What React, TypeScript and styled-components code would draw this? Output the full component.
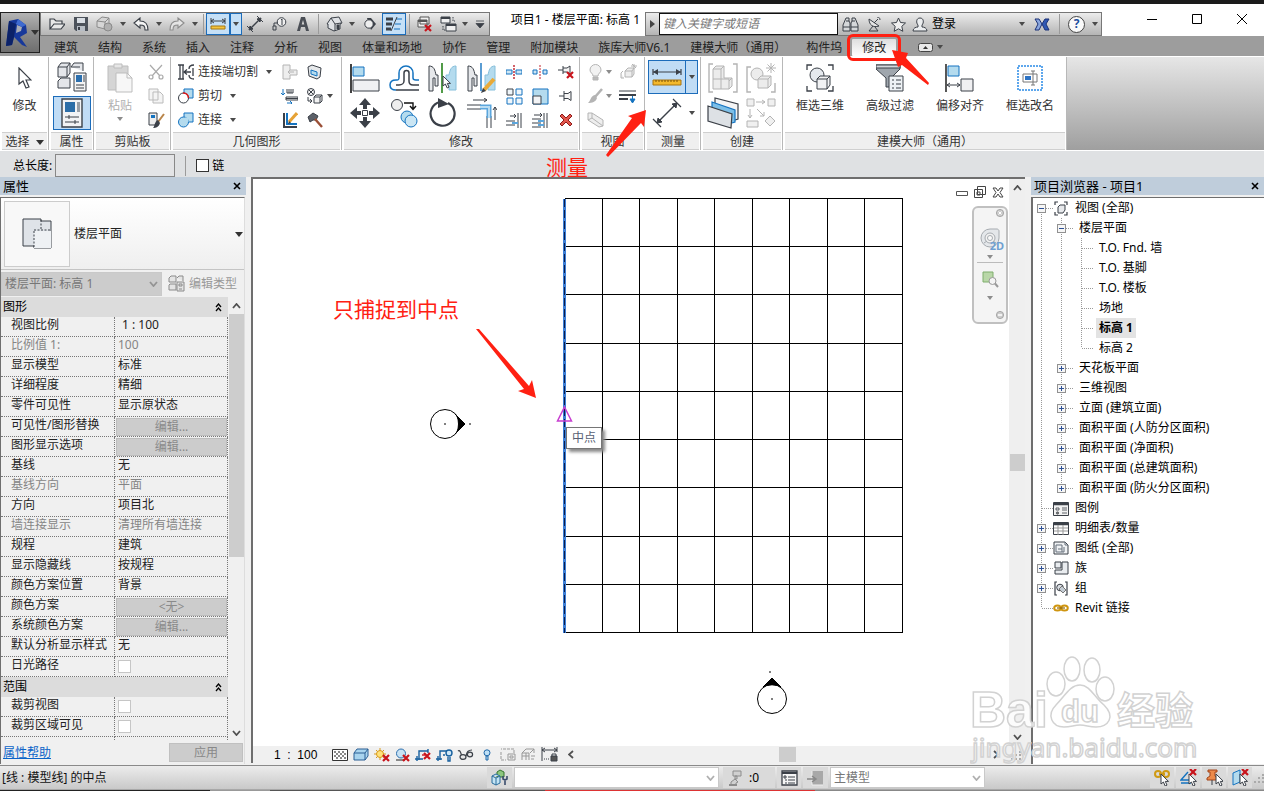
import React from 'react';
import styled, { createGlobalStyle, css } from 'styled-components';

const FONT = `'Noto Sans', 'Noto Sans CJK SC', sans-serif`;
const INK = '#3b4048';
const BLUE = '#1473c0';
const SKY = '#b4dbee';
const DIM = '#b4b4b4';
const RED = '#ff2012';

const GlobalStyle = createGlobalStyle`
  * { box-sizing: border-box; }
  body { margin: 0; background: #f0f0f0; }
  button, input, select { font: inherit; color: inherit; margin: 0; }
  button { padding: 0; border: 0; background: none; }
`;

/* ---------- icons ---------- */

type Art = [number, number, React.ReactNode];

const cross = (x: number, y: number) => (
  <path d={`M${x} ${y}l6 6M${x + 6} ${y}l-6 6`} stroke="#c8141c" strokeWidth="2.2" fill="none" />
);
const cursorAt = (x: number, y: number) => (
  <path d={`M${x} ${y}v10l2.4-2 1.8 4 1.8-.9-1.7-3.7h3.2z`} fill="#fff" stroke={INK} strokeWidth="1" />
);

const art: Record<string, Art> = {
  logo: [22, 28, <g>
    <path d="M3 2l9-2 8 6 1 8-7 4 7 10-5-2-8-8-2 8-6 1z" fill="#17389a" />
    <path d="M3 2l7 3-2 13-2 8-6 1z" fill="#0c2268" />
    <path d="M11 6l5 2-1 4-5 2z" fill="#a9adb6" />
    <path d="M12 0l8 6-4 2-6-3z" fill="#3f6bd0" />
  </g>],
  open: [16, 14, <path d="M1 12V2h4l2 2h6v3M1 12l4-5h11l-4 5z" fill="#e8e8e8" stroke={INK} strokeWidth="1.2" />],
  save: [14, 14, <g><path d="M0 0h14v14H2l-2-2z" fill="#4c525b" /><path d="M3 1h8v5H3z" fill="#d9dee4" /><path d="M3 9h8v5H3z" fill="#b8bec6" /><path d="M4 10h2v3H4z" fill={INK} /></g>],
  sync: [18, 17, <g fill="#d6d6d6" stroke="#8a8a8a" strokeWidth="1"><path d="M1 5l5-4 7 1v7l-4 4-8-2z" /><path d="M1 5l8 1 4-4M9 6v7" fill="none" /><circle cx="12" cy="11" r="4" fill="#b0b0b0" /></g>],
  undo: [16, 14, <path d="M1 6l6-5v3c6 0 8 3 8 9h-3c0-4-1-5-5-5v3z" fill="#f4f4f4" stroke={INK} strokeWidth="1.1" />],
  redo: [16, 14, <path d="M15 6L9 1v3C3 4 1 7 1 13h3c0-4 1-5 5-5v3z" fill="#e4e4e4" stroke="#8d8d8d" strokeWidth="1.1" />],
  measureSmall: [16, 12, <g><path d="M1 0v6M15 0v6M1 3h14M4 1L1 3l3 2M12 1l3 2-3 2" stroke={INK} fill="none" /><path d="M1 8h14v3H1z" fill="#f5c43c" stroke="#a47612" /></g>],
  dimension: [16, 16, <g stroke={INK} fill="none"><path d="M3 13L13 3" strokeWidth="1.3" /><path d="M0 10l6 6M10 0l6 6" /><path d="M2 14l1-4 3 3zM14 2l-1 4-3-3z" fill={INK} /></g>],
  tag: [15, 14, <g fill="#eee" stroke={INK}><circle cx="9.5" cy="5" r="4.3" /><path d="M2 9v-3h4M1 9h3v4H1zM9 3l1-1v6" fill="none" /></g>],
  textA: [12, 14, <path d="M0 14L4 0h4l4 14H9l-1-4H4l-1 4zM4.7 7.500h2.600L6 3z" fill="#4a4e55" fillRule="evenodd" />],
  house: [17, 16, <g stroke={INK}><path d="M1 8l4-6 8-1 3 6-2 1v5l-6 2-6-3V8z" fill="#dfe2e6" /><path d="M5 2l4 6v7M9 8l6-1" fill="none" /><path d="M11 9h2v4h-2z" fill={INK} /></g>],
  section: [14, 12, <g><path d="M4 0l4 0 5 6-5 6z" fill={INK} /><circle cx="6" cy="6" r="4.2" fill="#eee" stroke={INK} /></g>],
  thinLines: [16, 14, <g><path d="M0 2h7M0 7h6M0 12h5" stroke={INK} strokeWidth="3" /><path d="M10 2h6M9 7h6M8 12h6" stroke={BLUE} /><path d="M11 0L5 14" stroke={INK} /></g>],
  closeHidden: [17, 16, <g fill="#f0f0f0" stroke="#555"><path d="M4 1h9v7H4zM2 4h9v7H2z" /><path d="M2 5h9" strokeWidth="2" />{cross(9, 9)}</g>],
  switchWin: [17, 16, <g fill="#f0f0f0" stroke={INK}><path d="M1 1h9v6H1zM6 8h10v7H6z" /><path d="M1 2h9M6 9h10" strokeWidth="2" /><path d="M13 1v4h2M3 10v4h2" fill="none" strokeDasharray="1.500 1" /></g>],
  customize: [10, 8, <path d="M1 1h8M1 3.500h8L5 8z" stroke={INK} fill={INK} strokeWidth=".8" />],
  binoc: [17, 15, <g fill="#d4d7da" stroke={INK}><path d="M4 1h3v3l1 2v8H1V8zM13 1h-3v3L9 6v8h7V8z" /><path d="M1 10h7M9 10h7M4 4h3M10 4h3" /></g>],
  dish: [14, 15, <g fill="#e4e4e4" stroke={INK}><path d="M2 2c0 6 4 9 10 7z" /><path d="M7 6l4-4M6 9l-4 5h9l-3-4M10 0c2 0 3 1 3 3" fill="none" /></g>],
  star: [15, 15, <path d="M7.500 1l2 4.500 5 .5-3.700 3.300 1 5-4.300-2.500-4.300 2.500 1-5L.5 6l5-.5z" fill="#efefef" stroke={INK} />],
  user: [16, 15, <g fill="#eceef0" stroke={INK}><path d="M1 14c0-3 3-4 5-4V8C4 6 4 1 8 1s4 5 2 7v2c2 0 5 1 5 4z" /></g>],
  exchange: [16, 13, <g><path d="M1 1h4l3 5-3 6H1l3-6z" fill="#8ba7de" stroke="#1b3177" /><path d="M15 1h-4L8 6l3 6h4l-3-6z" fill="#3159b4" stroke="#1b3177" /></g>],
  minimize: [10, 10, <path d="M0 5.500h10" stroke="#000" />],
  maximize: [10, 10, <path d="M.5.5h9v9h-9z" stroke="#000" fill="none" />],
  close: [10, 10, <path d="M0 0l10 10M10 0L0 10" stroke="#000" fill="none" />],
  closeBold: [8, 8, <path d="M1 1l6 6M7 1L1 7" stroke="#000" strokeWidth="1.600" fill="none" />],
  ribbonState: [15, 9, <g><rect x=".5" y=".5" width="14" height="8" rx="2" fill="#e8e8e8" stroke="#444" /><path d="M5 6l2.500-3L10 6z" fill="#333" /></g>],
  cursor: [14, 22, <path d="M1 1v16l4-3 3 7 3-1-3-7h5z" fill="#fff" stroke={INK} strokeWidth="1.200" />],
  typeProps: [30, 30, <g stroke={INK}><path d="M1 5l3-4h9v10l-3 4H1zM14 5l3-4h9v8M1 19l3-3h9v10H1z" fill="#e4e6ea" /><path d="M1 5h9v10M10 5l3-4M14 5h9" fill="none" /><path d="M17 11h12v18H17z" fill="#f4f4f4" /><path d="M19 13h6v7h-6z" fill="#2b6fae" stroke="none" /><path d="M27 13v7M19 23h8M19 26h8" /></g>],
  props: [22, 30, <g><path d="M1 1h20v28H1z" fill="#f2f3f5" stroke={INK} strokeWidth="1.400" /><path d="M4 4h10v10H4z" fill="#2c6ea8" /><path d="M16 4h3v10h-3z" fill="#999fa6" /><path d="M4 19h14M4 24h14M8 17v4M14 22v4" stroke={INK} /></g>],
  paste: [26, 30, <g fill="#e6e6e6" stroke="#bdbdbd"><path d="M1 3h20v24H1z" fill="#d5d5d5" /><path d="M7 1h8v4H7z" /><path d="M9 10h11l5 5v14H9z" fill="#f7f7f7" /><path d="M20 10v5h5" fill="none" /></g>],
  cut: [16, 16, <g stroke="#aaa" fill="none" strokeWidth="1.200"><path d="M2 1l10 11M14 1L4 12" /><circle cx="3" cy="13" r="2" /><circle cx="13" cy="13" r="2" /></g>],
  copy: [16, 16, <g stroke="#bbb" fill="#f4f4f4"><path d="M1 1h9v11H1zM5 4h7l3 3v8H5z" /></g>],
  matchType: [17, 17, <g><path d="M1 1h8v12H1z" fill="#eee" stroke={INK} /><path d="M3 3h4v3H3z" fill={BLUE} /><path d="M16 2l-6 8" stroke="#b9854a" strokeWidth="2" /><path d="M10 8l2 3c-1 4-4 5-7 5 2-2 1-6 5-8z" fill={INK} /></g>],
  cope: [16, 16, <g fill="none" stroke={INK} strokeWidth="1.300"><path d="M0 1h6M0 15h6M2 1v14M5 1v14M16 1c-4 0-5 2-5 4M16 15c-4 0-5-2-5-4M15 4v8" /><path d="M6 8h7M9 5.500L6 8l3 2.500" /></g>],
  cutGeo: [16, 16, <g><path d="M6 1h9v9H6z" fill={SKY} stroke={BLUE} /><circle cx="5.500" cy="10" r="5" fill="#fff" stroke={INK} /><path d="M5 5a5 5 0 0 1 5.500 5" stroke="#e01818" strokeWidth="1.500" fill="none" /></g>],
  joinGeo: [16, 16, <g fill={SKY} stroke={BLUE}><path d="M6 1h9v9H6z" /><circle cx="5.500" cy="10" r="5" /><path d="M6.500 5.500h4v4.500h-4z" stroke="none" /></g>],
  wallJoin: [16, 16, <g fill="#eee" stroke={DIM}><path d="M1 1h7v5h7v5H8v4H1z" /><path d="M6 8h6M8 6L6 8l2 2" /></g>],
  splitFace: [15, 16, <g><path d="M1 3l4-2 9 3-1 9-3 2-8-3z" fill="#e6e8ea" stroke={INK} /><path d="M4 6l6 2v4l-6-2z" fill={SKY} stroke={BLUE} /></g>],
  beamJoin: [17, 16, <g fill="none" stroke={INK}><path d="M6 1v4h6V1M8 1v4M10 1v4M5 9h12v3H5zM5 10.500h12" /><path d="M2 1v6M0 5l2 2 2-2M6 15h5M9 13l2 2-2 2" stroke={BLUE} /></g>],
  unjoin: [17, 16, <g fill="#f2f2f2" stroke={INK}><circle cx="5" cy="4" r="3.500" /><path d="M2.500 1.500l5 5M7.500 1.500l-5 5M8 9l2-2h6v6l-2 2H8zM8 9h6v6M14 9l2-2M2 9v4h4M4 11l2 2-2 2" /></g>],
  corner: [16, 17, <g fill="none"><path d="M2 1v14h13" stroke={INK} strokeWidth="2" /><path d="M5 1v11h10" stroke={BLUE} strokeWidth="2" /><path d="M7 10l8-9" stroke="#e6a236" strokeWidth="3" /><path d="M6 12l1-3 2 2z" fill={INK} /></g>],
  hammer: [16, 16, <g><path d="M1 5l5-4 5 3-2 4-3 0-3 2z" fill="#5b6068" stroke={INK} /><path d="M8 7l7 8" stroke="#9a4f36" strokeWidth="2.400" /></g>],
  align: [30, 30, <g><path d="M1 1v29" stroke="#111" strokeWidth="1.600" /><path d="M3 4h11v9H3z" fill={SKY} stroke={BLUE} /><path d="M3 17h26v11H3z" fill="#f0f1f3" stroke={INK} /></g>],
  offset: [30, 26, <g fill="none" strokeWidth="1.500"><path d="M7 25c-4 0-6-2-6-5s2-5 6-5h1c2 0 2-1 2-3V8a7 7 0 0 1 14 0v5c0 1 1 2 3 2h3" stroke={BLUE} /><path d="M7 20h3c3 0 5-2 5-4V8a2 2 0 0 1 5 0v8c0 3 2 4 4 4h6M7 25h23" stroke={INK} /></g>],
  mirrorPick: [30, 30, <g><path d="M1 3c5 0 6 4 7 9h2v11H7V15H5v13H1z" fill="#e6e8eb" stroke={INK} /><path d="M28 3c-5 0-6 4-7 9h-3v11h3v4h7z" fill={SKY} stroke="#86bfdb" /><path d="M14 0v30" stroke="#3f9135" strokeWidth="1.800" />{cursorAt(15, 13)}</g>],
  mirrorDraw: [30, 30, <g><path d="M1 3c5 0 6 4 7 9h2v11H7V15H5v13H1z" fill="#e6e8eb" stroke={INK} /><path d="M28 3c-5 0-6 4-7 9h-3v11h3v4h7z" fill={SKY} stroke="#86bfdb" /><path d="M14 0v28" stroke={BLUE} strokeWidth="1.400" /><path d="M27 16L17 27" stroke="#e9aa38" strokeWidth="4" /><path d="M14 30l2-5 3 3z" fill={INK} /></g>],
  move: [30, 30, <g fill={INK}><path d="M15 0l6 7h-4v4h-4V7H9zM15 30l6-7h-4v-4h-4v4H9zM0 15l7-6v4h4v4H7v4zM30 15l-7-6v4h-4v4h4v4z" /><path d="M12.500 12.500h5v5h-5z" fill="#fff" stroke={INK} /></g>],
  copyObj: [28, 30, <g><circle cx="7" cy="7" r="5.500" fill="#eee" stroke={INK} /><path d="M14 5h9v6M20 8l3 3.500L26 8" fill="none" stroke="#111" strokeWidth="1.400" /><circle cx="17" cy="19" r="6" fill={SKY} stroke={BLUE} /><circle cx="21" cy="23" r="6" fill="#cbe6f4" stroke={BLUE} /></g>],
  rotate: [30, 30, <g><path d="M20 5a12 12 0 1 1-8-1" fill="none" stroke={INK} strokeWidth="2.200" /><path d="M10 0l11 6-11 4z" fill={INK} /></g>],
  trim: [30, 30, <g fill="none"><path d="M0 7h14M0 11h14M20 18v12M24 18v12" stroke={INK} /><path d="M13 9h9v11" stroke="#5ba6dd" strokeWidth="5" /><path d="M13 9h9v11" stroke="#b9dcf2" strokeWidth="2" /><path d="M6 2h14M17 0l3 2-3 2M28 22V9M26 12l2-3 2 3" stroke={INK} /></g>],
  split: [16, 14, <g><path d="M0 5h6v4H0zM10 5h6v4h-6z" fill="#cde6f4" stroke={BLUE} /><path d="M8 0v14" stroke="#c0202a" strokeDasharray="2 1" strokeWidth="1.400" /></g>],
  splitGap: [16, 14, <g><path d="M1 5h4v4H1zM11 5h4v4h-4z" fill="#cde6f4" stroke={BLUE} /><path d="M8 0v14" stroke="#c0202a" strokeDasharray="2 1" /></g>],
  unpin: [17, 16, <g><path d="M0 6h5M5 2v8M5 4h4l3-2v8L9 8H5" fill="#f4f4f4" stroke={INK} />{cross(9, 8)}</g>],
  array: [17, 17, <g fill="#f0f6fa"><path d="M1 1h6v6H1z" stroke={INK} /><path d="M10 1h6v6h-6zM1 10h6v6H1zM10 10h6v6h-6z" stroke={BLUE} /></g>],
  scale: [17, 17, <g><path d="M1 1h15v15H1z" fill={SKY} stroke={BLUE} /><path d="M1 8h8v8H1z" fill="#f2f3f5" stroke={INK} /></g>],
  pin: [15, 12, <path d="M0 6h5M5 1v10M5 3.500h4l3-2v9l-3-2H5" fill="#f4f4f4" stroke={INK} />],
  trimOne: [16, 16, <g fill="none" stroke={INK}><path d="M0 9h9M0 13h9M12 1v15M15 1v15M4 4h6M8 2l2 2-2 2" /><path d="M6 11h6" stroke="#5ba6dd" strokeWidth="2" /></g>],
  trimMany: [16, 16, <g fill="none" stroke={INK}><path d="M0 7h9M0 11h9M0 15h9M12 1v15M15 1v15M2 3h8M8 1l2 2-2 2" /><path d="M6 9h6M6 13h6" stroke="#5ba6dd" strokeWidth="2" /></g>],
  del: [14, 14, <path d="M1 3l2-2 4 4 4-4 2 2-4 4 4 4-2 2-4-4-4 4-2-2 4-4z" fill="#e2574c" stroke="#8f1a1a" />],
  bulb: [13, 17, <g fill="#f2f2f2" stroke={DIM}><path d="M4 12c0-3-3-3-3-6a5 5 0 0 1 11 0c0 3-3 3-3 6z" /><path d="M4 13h5v3H4z" fill="#bbb" /></g>],
  displace: [17, 16, <g fill="#eee" stroke={DIM}><path d="M5 7l3-3h6v6l-2 3H5zM5 7h7v6M12 7l2-3" /><path d="M1 9l2-2M1 9v5h3M14 0v5M11 2h6M12 0l4 4" /></g>],
  brush: [16, 16, <g><path d="M15 1L8 9" stroke={DIM} strokeWidth="2.500" /><path d="M8 7l2 3c-1 4-5 5-9 5 3-2 2-7 7-8z" fill={DIM} /></g>],
  lineweight: [18, 15, <g><path d="M0 2h17" stroke={INK} /><path d="M0 6h17" stroke={INK} strokeWidth="2" /><path d="M0 10h9" stroke={INK} strokeWidth="2" /><path d="M13.500 7v5M11 10l2.500 4 2.500-4z" stroke={BLUE} fill={BLUE} /></g>],
  hideBox: [17, 16, <path d="M1 1l4 0 11 7v6l-4 1L1 8zM5 6V1M5 6l11 8M1 8l4-2" fill="#eee" stroke={DIM} />],
  measure: [30, 18, <g><path d="M1 1v6M29 1v6M1 4h28" stroke={INK} strokeWidth="1.200" /><path d="M1 4l5-3v6zM29 4l-5-3v6z" fill={INK} /><path d="M1 12h28v5H1z" fill="#f4b92d" stroke="#a87410" /><path d="M4 12v2M7 12v2M10 12v2M13 12v2M16 12v2M19 12v2M22 12v2M25 12v2" stroke="#7a5206" /></g>],
  dimensionBig: [30, 30, <g stroke={INK} fill="none"><path d="M5 25L25 5" strokeWidth="1.400" /><path d="M1 21l8 8M21 1l8 8" strokeWidth="1.200" /><path d="M5 25l1-5 4 4zM25 5l-1 5-4-4z" fill={INK} /></g>],
  assembly: [30, 30, <g fill="#ececec" stroke={DIM}><path d="M5 1H1v28h4M25 1h4v28h-4" fill="none" strokeWidth="1.400" /><path d="M5 6l3-3h8v12h8v8l-3 3H5z" /><path d="M5 6h8v10h8v10M13 6l3-3M5 16h8v10M21 18l3-3" fill="none" /></g>],
  groupNew: [30, 30, <g fill="#ececec" stroke={DIM}><path d="M5 4H1v25h4M25 29h4v-9" fill="none" strokeWidth="1.400" /><circle cx="11" cy="11" r="6" /><path d="M12 16l3-3h10v9l-3 3H12zM12 16h10v9M22 16l3-3" /><path d="M25 0v10M20 5h10M21.500 1.500l7 7M28.500 1.500l-7 7" /></g>],
  similar: [32, 32, <g stroke={INK} strokeWidth="1.200"><path d="M8 9V1l23 6v15l-3 1" fill="#f4f4f4" /><path d="M5 11V5l23 8v12l-3 1" fill="#7cbfe8" stroke={BLUE} /><path d="M1 9l24 8-1 14-23-7z" fill="#dde1e5" /></g>],
  parts: [30, 30, <g fill="#f0f0f0" stroke={DIM}><path d="M1 1h7v7H1zM22 1h7v7h-7zM1 23h11v6H1zM24 18l5 5-5 5-5-5z" /><path d="M10 4h9M16 2l3 2-3 2M4 11v9M2 17l2 3 2-3M11 11l7 7M14 18h4v-4" fill="none" /></g>],
  box3d: [28, 28, <g stroke={INK}><path d="M6 1H1v5M22 1h5v5M1 22v5h5M27 22v5h-5" fill="none" strokeWidth="1.300" /><circle cx="11" cy="11" r="7" fill="#e5e9ee" /><path d="M11 15l3-3h10v9l-3 4H11zM11 15h10v10M21 15l3-3" fill="#f1f2f4" /></g>],
  filter: [28, 28, <g stroke={INK}><path d="M0 1h24v4l-9 9v9h-5v-9L0 5z" fill="#9fa6ad" /><path d="M0 1h24v3H0z" fill="#d4d8dc" /><path d="M13 12h14v15H13z" fill="#eef2f5" /><path d="M16 16h2M16 20h2M16 24h2M20 16h5M20 20h5M20 24h5" /></g>],
  offsetAlign: [30, 28, <g><path d="M1 0v28" stroke="#111" strokeWidth="1.400" /><path d="M3 2h11v10H3z" fill={SKY} stroke={BLUE} /><path d="M16 15h12v12H16z" fill="#f0f0f2" stroke={INK} /><path d="M2 21h13M5 19l-3 2 3 2M12 19l3 2-3 2" stroke={INK} fill="none" /></g>],
  rename: [26, 26, <g fill="none"><path d="M1 1h24v24H1z" stroke="#2a8ae6" strokeWidth="1.500" strokeDasharray="2 1" /><path d="M6 9h14v8H6z" stroke="#777" fill="#fff" /><path d="M8 11h6v4H8z" fill="#2d73c4" /><path d="M16 6v14M14 6h4M14 20h4" stroke="#777" /></g>],
  floorPlan: [34, 34, <g stroke={INK}><path d="M3 2h18v2h10v27H14v-2H3z" fill="#dfe3e8" /><path d="M14 14h17v17H14z" fill="#eef1f4" stroke="none" /><path d="M21 3v10M14 13h17M14 14v16" strokeDasharray="2 1.500" fill="none" /></g>],
  editType: [17, 17, <g fill="#e4e4e4" stroke="#8a8a8a"><path d="M1 3l2-2h5v6H1zM9 3l2-2h4v5M1 10l1-1h6v6H1z" /><path d="M9 7h7v9H9z" /><path d="M11 9h3v2h-3zM11 14h3" /></g>],
  collapse: [7, 9, <path d="M1 4l2.500-3L6 4M1 8l2.500-3L6 8" fill="none" stroke="#000" strokeWidth="1.300" />],
  winMin: [12, 5, <path d="M.5.5h11v4H.5z" fill="#fff" stroke="#555" />],
  winRestore: [12, 12, <path d="M3.500.5h8v8h-8zM.5 3.500h8v8h-8zM3 6h3v3H3z" fill="#fff" stroke="#444" />],
  winClose: [12, 11, <path d="M1 1h3l2 3 2-3h3L8 5.500 11 10H8L6 7l-2 3H1l3-4.500z" fill="#fff" stroke="#444" />],
  navClose: [8, 8, <g><circle cx="4" cy="4" r="3.600" fill="#ccc" stroke="#999" strokeWidth=".8" /><path d="M2.500 2.500l3 3M5.500 2.500l-3 3" stroke="#fff" /></g>],
  navMenu: [8, 8, <g><circle cx="4" cy="4" r="3.600" fill="#ccc" stroke="#999" strokeWidth=".8" /><path d="M2 4h4" stroke="#fff" strokeWidth="1.500" /></g>],
  wheel: [20, 20, <g fill="#e4e7ea" stroke="#a6abb0"><path d="M10 1h7c1 0 2 1 2 2v7a9 9 0 1 1-9-9z" /><circle cx="10" cy="10" r="5" fill="#f2f2f2" /><circle cx="10" cy="10" r="2.500" fill="#fafafa" /><path d="M4 15l3-2M13 13l3 2" /></g>],
  zoomRegion: [17, 17, <g><path d="M1 1h10v10H1z" fill="#b9d7a8" stroke="#7fae6c" /><circle cx="10.500" cy="10" r="3.500" fill="#f4f4f4" stroke="#999" /><path d="M13 12.500l3 3.500" stroke="#999" strokeWidth="2" /></g>],
  detail: [16, 12, <g><path d="M.5.5h15v11H.5z" fill="#fff" stroke="#333" /><path d="M2 2h2v2H2zM6 2h2v2H6zM10 2h2v2h-2zM4 4h2v2H4zM8 4h2v2H8zM12 4h2v2h-2zM2 6h2v2H2zM6 6h2v2H6zM10 6h2v2h-2zM4 8h2v2H4zM8 8h2v2H8zM12 8h2v2h-2z" fill="#888" /></g>],
  visual: [16, 13, <path d="M1 5l3-4h11v7l-3 4H1zM1 5h11v7M12 5l3-4" fill="#a9d4ee" stroke="#2b5f94" />],
  sun: [16, 14, <g><path d="M6 0v12M0 6h12M2 2l8 8M10 2l-8 8" stroke="#d99a1c" /><circle cx="6" cy="6" r="3.500" fill="#ffe27a" stroke="#d99a1c" />{cross(9, 7)}</g>],
  shadow: [16, 14, <g><circle cx="6" cy="5.500" r="4.500" fill="#c7e2f5" stroke="#2d6fae" /><path d="M1 12h9" stroke="#888" strokeWidth="2" />{cross(8, 7)}</g>],
  crop: [17, 14, <g fill="none" stroke="#17609f" strokeWidth="1.400"><path d="M4 12V3h9v2M0 11h8M2 8v5M13 1v3" /><path d="M7 7h3" stroke="#c8141c" />{cross(9, 5)}</g>],
  cropShow: [17, 14, <g fill="none" stroke="#17609f" strokeWidth="1.400"><path d="M4 12V3h8M0 11h6M2 8v5" /><circle cx="13" cy="5" r="3" fill="#cfe7f7" /><path d="M12 9v4h2V9M7 7h2" /></g>],
  glasses: [17, 12, <g fill="#e6e6e6" stroke={INK} strokeWidth="1.200"><path d="M1 2c2-2 3 3 4 5M9 7c1-4 2-6 6-6" fill="none" /><ellipse cx="6" cy="8" rx="3" ry="2.400" /><ellipse cx="13" cy="5.500" rx="2.600" ry="2.300" /></g>],
  reveal: [8, 12, <g fill="#bfe0f6" stroke="#2168a8"><circle cx="4" cy="3.800" r="3" /><path d="M3 7h2v4H3z" /></g>],
  tempView: [16, 13, <g fill="none" stroke="#999"><path d="M3 1h11v4M1 4v8h5M1 1h1" strokeDasharray="3 1" /><path d="M8 6h7v6H8zM10 8h3v2h-3z" /></g>],
  analysis: [16, 13, <g fill="none" stroke="#999"><path d="M1 5l4-4h8M1 5h7v7M1 5v7M5 5v7M1 8h7M9 5l4-4v4M10 8h4M10 11h3" /></g>],
  constraint: [17, 15, <g stroke={INK} fill="none"><path d="M1 0v14M16 0v5M1 3h15M4 1L1 3l3 2M13 1l3 2-3 2" /><path d="M3 12h6" strokeDasharray="1 1" /><path d="M10 9h6v5h-6z" fill="#555" /><path d="M11 9V7h4v2" /></g>],
  workset: [17, 17, <g stroke="#2a6c9c"><path d="M6 3l3-2 4 2v5H6z" fill="#8cc57e" stroke="#35742d" /><path d="M1 7l4-2 4 2v7l-4 2-4-2zM1 7l4 2 4-2M5 9v7" fill="#c4e4f4" /><path d="M12 7v3l2 1 2-1V7M14 11v5" fill="none" stroke="#3a4b6c" strokeWidth="1.600" /></g>],
  editable: [15, 16, <g fill="#d0d0d0" stroke="#8c8c8c"><path d="M5 1h8v5H5zM7 6h2v3H7zM3 15V12l4-3 3 3-2 1v2z" /><path d="M1 15h8" strokeWidth="2" /></g>],
  designOpt: [17, 16, <g stroke={INK} fill="#f5f5f5"><path d="M1 1h15v14H1z" strokeWidth="1.300" /><path d="M1 3h15" strokeWidth="2" /><path d="M3 6h2v2H3zM7 7h7M7 10h7M7 13h7M4 10h2M4 13h2" /></g>],
  pickAdd: [17, 16, <g><path d="M5 1h11v14H5z" fill="#a8a8a8" /><path d="M5 1v14h11" fill="none" stroke="#eee" /><path d="M0 9h8M5 6l4 3-4 3" fill="none" stroke="#888" strokeWidth="1.500" /></g>],
  selLinks: [17, 17, <g><circle cx="4" cy="5" r="3" fill="none" stroke="#cf9a14" strokeWidth="2" /><circle cx="12" cy="5" r="3" fill="none" stroke="#cf9a14" strokeWidth="2" /><path d="M5 5h6" stroke="#cf9a14" strokeWidth="2" />{cursorAt(7, 5)}</g>],
  selUnder: [17, 17, <g><path d="M8 3L1 11h9M1 14h10" fill="none" stroke={BLUE} strokeWidth="1.400" />{cursorAt(9, 5)}{cross(10, 0)}</g>],
  selPinned: [17, 17, <g><path d="M2 1h9v2H9v4l3 2v2H1V9l3-2V3H2z" fill="#ec8a4a" stroke="#a2451a" /><path d="M6 11v5" stroke={INK} />{cursorAt(10, 5)}</g>],
  selFace: [17, 17, <g><path d="M1 4l7-3v12l-7 3z" fill={SKY} stroke={BLUE} />{cursorAt(8, 5)}{cross(10, 0)}</g>],
  views: [14, 15, <g fill="none" stroke={INK}><path d="M4 1H1v3M10 1h3v3M1 11v3h3M13 11v3h-3" strokeWidth="1.200" /><path d="M4 6l2-2h5v5l-2 3H4z" fill="#e7e9ec" /></g>],
  legend: [16, 15, <g stroke={INK} fill="#f2f2f2"><path d="M.5 1.500h15v13H.5z" /><path d="M1 3h14" strokeWidth="2.500" /><path d="M3 7h3v2H3zM9 7h5M9 9h5M9 12h5" strokeWidth=".8" /><circle cx="4.500" cy="12" r="1.200" fill="#777" strokeWidth=".6" /></g>],
  schedule: [16, 13, <g stroke={INK} fill="#fff"><path d="M.5.5h15v12H.5z" /><path d="M1 2h14" strokeWidth="2.500" /><path d="M5 3v10M1 6h14M1 9h14M10 3v10" stroke="#999" /></g>],
  sheet: [16, 14, <g stroke={INK} fill="#f0f2f4"><path d="M1 1h11l3 3v9H1z" /><path d="M3 4h6v7H3zM5 8h4M12 1v3h3M11 6v5H9" fill="none" stroke="#66707c" /></g>],
  family: [15, 14, <g stroke={INK} fill="#e9ecef"><path d="M1 1h6v6H1zM8 1h6v12H1V9h7z" /></g>],
  group: [14, 15, <g stroke={INK} fill="none"><path d="M3 1H1v13h2M11 1h2v13h-2" strokeWidth="1.200" /><circle cx="6" cy="6.500" r="3.300" fill="#d9dde2" /><path d="M8 5l4 4-3 3-4-4z" fill="#c4ccd4" stroke="#777" /></g>],
  link: [16, 8, <g fill="none" stroke="#cf9510" strokeWidth="2"><ellipse cx="4.500" cy="4" rx="3.300" ry="2.600" /><ellipse cx="11.500" cy="4" rx="3.300" ry="2.600" /><path d="M4 4h8" stroke="#8f6405" strokeWidth="1.200" /></g>],
  down: [6, 4, <path d="M0 0h6L3 4z" fill="#4a4a4a" />],
  downDim: [6, 4, <path d="M0 0h6L3 4z" fill="#8c8c8c" />],
  downLarge: [8, 5, <path d="M0 0h8L4 5z" fill="#333" />],
  right: [5, 8, <path d="M0 0v8l5-4z" fill="#444" />],
  chevUp: [9, 6, <path d="M1 5l3.500-4L8 5" fill="none" stroke="#505050" strokeWidth="1.800" />],
  chevDown: [9, 6, <path d="M1 1l3.500 4L8 1" fill="none" stroke="#505050" strokeWidth="1.800" />],
  chevLeft: [6, 9, <path d="M5 1L1 4.500 5 8" fill="none" stroke="#505050" strokeWidth="1.800" />],
  chevRight: [6, 9, <path d="M1 1l4 3.500L1 8" fill="none" stroke="#505050" strokeWidth="1.800" />],
  grip: [10, 10, <path d="M8 1h2v2H8zM8 4h2v2H8zM8 8h2v2H8zM4 4h2v2H4zM4 8h2v2H4zM0 8h2v2H0z" fill="#aaa" />],
};

const Svg = styled.svg`
  display: block;
  flex: none;
`;

function Icon({ name }: { name: string }) {
  const [w, h, body] = art[name];
  return <Svg width={w} height={h} viewBox={`0 0 ${w} ${h}`} aria-hidden="true">{body}</Svg>;
}

/* ---------- shell ---------- */

const Page = styled.div`
  position: relative;
  display: flex;
  flex-direction: column;
  min-height: 100vh;
  overflow: hidden;
  font: 12px/16px ${FONT};
  color: #1c1c1c;
  background: #f0f0f0;
`;

const Header = styled.header`
  position: relative;
  border-top: 4px solid #1b1b1b;
  background: #fff;
`;

const AppMenu = styled.button`
  position: absolute;
  left: 0;
  top: 8px;
  width: 40px;
  height: 41px;
  display: flex;
  align-items: center;
  gap: 3px;
  padding: 0 3px 0 5px;
  border: 1px solid #222;
  background: linear-gradient(#b4b4b4, #8a8a8a 50%, #6f6f6f);
`;

const TitleRow = styled.div`
  display: flex;
  height: 32px;
  padding-top: 8px;
`;

const barSkin = css`
  display: flex;
  align-items: center;
  height: 24px;
  border: 1px solid #777;
  background: linear-gradient(#ececec, #b4b4b4);
`;

const QuickBar = styled.div`
  ${barSkin}
  margin-left: 40px;
  width: 450px;
  flex: none;
  padding-left: 4px;
`;

const Tool = styled.button<{ $w?: number; $active?: boolean }>`
  display: flex;
  flex: none;
  align-items: center;
  justify-content: center;
  width: ${p => p.$w ?? 24}px;
  height: 22px;
  ${p => p.$active && 'background: #c5e0f7; border: 1px solid #1c6cba;'}
`;

const Divider = styled.i<{ $m?: number }>`
  flex: none;
  width: 1px;
  height: 20px;
  margin: 0 ${p => p.$m ?? 3}px;
  background: #9b9b9b;
`;

const DocTitle = styled.h1`
  flex: 1;
  margin: 0;
  padding-right: 5px;
  text-align: right;
  white-space: nowrap;
  font-size: 12px;
  line-height: 16px;
  font-weight: 400;
  color: #000;
`;

const InfoCenter = styled.div`
  ${barSkin}
  flex: none;
  width: 457px;
  color: #000;
`;

const Search = styled.input`
  width: 179px;
  height: 22px;
  padding: 0 3px 2px;
  border: 1px solid #111;
  background: #fff;
  font-style: italic;
  &::placeholder { color: #777; opacity: 1; }
`;

const SignIn = styled.button`
  display: flex;
  align-items: center;
  flex: none;
  gap: 4px;
  width: 115px;
  padding-left: 2px;
  & > :last-child { margin-left: auto; }
`;

const HelpMark = styled.button`
  flex: none;
  width: 17px;
  height: 17px;
  margin: 0 4px 0 8px;
  border: 1px solid #444;
  border-radius: 50%;
  background: #fafafa;
  color: #1c4f9f;
  font-weight: 700;
  font-size: 12px;
  line-height: 14px;
`;

const WindowButtons = styled.div`
  display: flex;
  flex: none;
  margin: -4px 0 0 27px;
`;

const WinButton = styled.button`
  display: flex;
  width: 45px;
  height: 22px;
  align-items: center;
  justify-content: center;
`;

const Tabs = styled.nav`
  display: flex;
  align-items: flex-end;
  gap: 20px;
  height: 20px;
  padding-left: 54px;
  background: #9d9d9d;
`;

const Tab = styled.button<{ $active?: boolean }>`
  flex: none;
  height: 17px;
  line-height: 17px;
  color: #222;
  ${p => p.$active && css`
    margin: 0 -10px;
    padding: 0 10px;
    background: linear-gradient(#dedede, #fff);
    outline: 3px solid ${RED};
    outline-offset: 2px;
    border-radius: 1px;
    z-index: 1;
  `}
`;

const StateTool = styled.button`
  display: flex;
  align-items: center;
  gap: 4px;
  height: 18px;
  margin-left: 12px;
`;

/* ---------- ribbon ---------- */

const Ribbon = styled.div`
  display: flex;
  height: 95px;
  border-top: 1px solid #fff;
  border-bottom: 1px solid #fff;
  background: linear-gradient(#e6e6e6, #9f9f9f);
`;

const PanelBox = styled.section<{ $w: number }>`
  display: flex;
  flex: none;
  flex-direction: column;
  width: ${p => p.$w}px;
  background: #fff;
  border-right: 1px solid #b8b8b8;
`;

const PanelBody = styled.div<{ $pad?: number }>`
  display: flex;
  flex: 1;
  padding: 3px 0 0 ${p => p.$pad ?? 0}px;
`;

const PanelName = styled.h2`
  display: flex;
  align-items: center;
  justify-content: center;
  gap: 6px;
  height: 18px;
  margin: 0 1px 0 2px;
  padding-top: 2px;
  border-top: 1px solid #cfcfcf;
  border-bottom: 1px solid #cfcfcf;
  background: #efefef;
  font-size: 12px;
  line-height: 16px;
  font-weight: 400;
  color: #333;
`;

function Panel({ name, w, pad, arrow, children }: { name: string; w: number; pad?: number; arrow?: boolean; children: React.ReactNode }) {
  return (
    <PanelBox $w={w}>
      <PanelBody $pad={pad}>{children}</PanelBody>
      <PanelName>{name}{arrow && <Icon name="downLarge" />}</PanelName>
    </PanelBox>
  );
}

const BigButton = styled.button<{ $w: number; $dim?: boolean }>`
  display: flex;
  flex: none;
  flex-direction: column;
  align-items: center;
  width: ${p => p.$w}px;
  color: ${p => (p.$dim ? '#b0b0b0' : '#333')};
  & > span { line-height: 20px; white-space: nowrap; }
  & > svg:last-child { margin-top: 1px; }
`;

const Glyph = styled.i`
  display: flex;
  align-items: center;
  height: 36px;
`;

const Stack = styled.div<{ $cols: number; $cell: number; $row: number }>`
  display: grid;
  flex: none;
  align-content: start;
  grid-template-columns: repeat(${p => p.$cols}, ${p => p.$cell}px);
  grid-auto-rows: ${p => p.$row}px;
  & > button { display: flex; align-items: center; justify-content: center; }
`;

const GeoList = styled.div`
  display: flex;
  flex: none;
  flex-direction: column;
  width: 99px;
`;

const GeoButton = styled.button`
  display: flex;
  align-items: center;
  height: 24px;
  white-space: nowrap;
  color: #333;
  & > span { margin: 0 8px 0 4px; }
`;

const ArrowCol = styled.div<{ $top: number }>`
  display: flex;
  flex: none;
  flex-direction: column;
  gap: 20px;
  width: 8px;
  padding-top: ${p => p.$top}px;
`;

const ActiveTile = styled.button`
  display: flex;
  align-items: center;
  justify-content: center;
  width: 38px;
  height: 34px;
  border: 1px solid #1c6cba;
  background: #c0dcf5;
`;

const Split = styled.div<{ $active?: boolean }>`
  display: flex;
  width: 50px;
  height: 34px;
  ${p => p.$active && 'background: #c0dcf5; border: 1px solid #1c6cba;'}
  & > button { display: flex; align-items: center; justify-content: center; }
  & > button:first-child { flex: 1; }
  & > button:last-child { width: 12px; ${p => p.$active && 'border-left: 1px solid #1c6cba;'} }
`;

const Column = styled.div<{ $w: number }>`
  display: flex;
  flex: none;
  flex-direction: column;
  align-items: center;
  gap: 2px;
  width: ${p => p.$w}px;
`;

const PropTile = styled.button`
  display: flex;
  align-items: center;
  height: 34px;
`;

function Grid({ names, cols, cell, row }: { names: string[]; cols: number; cell: number; row: number }) {
  return (
    <Stack $cols={cols} $cell={cell} $row={row}>
      {names.map(n => <button key={n} aria-label={n}><Icon name={n} /></button>)}
    </Stack>
  );
}

function Big({ icon, label, w, dim, arrow }: { icon: string; label: string; w: number; dim?: boolean; arrow?: boolean }) {
  return (
    <BigButton $w={w} $dim={dim}>
      <Glyph><Icon name={icon} /></Glyph>
      <span>{label}</span>
      {arrow && <Icon name="downDim" />}
    </BigButton>
  );
}

const OptionsBar = styled.div`
  display: flex;
  align-items: center;
  height: 26px;
  padding: 3px 0 0 13px;
  background: #dfe1e3;
  color: #000;
`;

const LengthInput = styled.input`
  width: 120px;
  height: 23px;
  margin-left: 3px;
  border: 1px solid #888;
  background: #e3e4e6;
`;

const Check = styled.input`
  appearance: none;
  flex: none;
  display: block;
  width: 13px;
  height: 13px;
  border: 1px solid #333;
  background: #fff;
  &:disabled { border-color: #c6c6c6; }
`;

const ChainLabel = styled.label`
  display: flex;
  align-items: center;
  gap: 3px;
`;

/* ---------- palettes ---------- */

const Main = styled.main`
  display: flex;
  flex: 1;
`;

const Palette = styled.aside<{ $w: number }>`
  display: flex;
  flex: none;
  flex-direction: column;
  width: ${p => p.$w}px;
  padding-bottom: 1px;
`;

const PaletteTitle = styled.h2`
  display: flex;
  align-items: center;
  justify-content: space-between;
  height: 18px;
  margin: 0 0 2px;
  padding: 0 5px 0 3px;
  background: #bfcddb;
  color: #000;
  font-size: 13px;
  line-height: 16px;
  font-weight: 400;
`;

const PropsFrame = styled.div`
  display: flex;
  flex: 1;
  flex-direction: column;
  border-top: 1px solid #6f6f6f;
  border-left: 1px solid #6f6f6f;
  border-right: 1px solid #ddd;
  margin-right: 1px;
`;

const TypePicker = styled.button`
  display: flex;
  align-items: center;
  height: 72px;
  padding: 1px 1px 0 3px;
  border-bottom: 1px solid #c4c4c4;
  background: linear-gradient(#fff, #efefef);
  color: #222;
  & > span { flex: 1; margin-left: 4px; text-align: left; }
`;

const Thumb = styled.i`
  display: flex;
  align-items: center;
  justify-content: center;
  width: 66px;
  height: 66px;
  border: 1px solid #ccc;
  background: #f8f8f8;
`;

const InstanceRow = styled.div`
  display: flex;
  align-items: center;
  gap: 6px;
  height: 27px;
`;

const SelectWrap = styled.div<{ $w: number; $h: number; $bg: string }>`
  display: grid;
  flex: none;
  align-items: center;
  width: ${p => p.$w}px;
  height: ${p => p.$h}px;
  background: ${p => p.$bg};
  border: 1px solid #c9c9c9;
  & > * { grid-area: 1 / 1; }
  & > svg { justify-self: end; margin-right: 3px; opacity: .45; pointer-events: none; }
  & > select {
    appearance: none;
    height: 100%;
    padding: 0 3px;
    border: 0;
    background: none;
    color: #777;
    opacity: 1;
  }
`;

function Select({ w, h, bg, label, value }: { w: number; h: number; bg: string; label: string; value: string }) {
  return (
    <SelectWrap $w={w} $h={h} $bg={bg}>
      <select aria-label={label} disabled><option>{value}</option></select>
      <Icon name="chevDown" />
    </SelectWrap>
  );
}

const EditType = styled.button`
  display: flex;
  align-items: center;
  gap: 4px;
  color: #999;
  white-space: nowrap;
`;

const PropsScroll = styled.div`
  display: flex;
  flex: 1;
`;

const PropTable = styled.table`
  width: 227px;
  align-self: flex-start;
  border-collapse: separate;
  border-spacing: 0;
  table-layout: fixed;
  & th { text-align: left; font-weight: 400; }
`;

const GroupHead = styled.th`
  height: 20px;
  padding: 0 6px 0 2px;
  background: #dcdcdc;
  color: #000;
  & > div { display: flex; align-items: center; justify-content: space-between; line-height: 16px; }
`;

const PropRow = styled.tr<{ $dim?: boolean }>`
  color: ${p => (p.$dim ? '#858585' : '#222')};
  & > * {
    height: 20px;
    padding: 0 0 3px 10px;
    line-height: 16px;
    white-space: nowrap;
    border-bottom: 1px dotted #777;
    border-right: 1px dotted #777;
  }
  & > td { padding-left: 3px; }
`;

const ButtonCell = styled.td`
  && { padding: 1px 0 0 1px; }
`;

const CheckCell = styled.td`
  && { padding-bottom: 1px; }
`;

const ValueCell = styled.td<{ $inset?: boolean }>`
  && { padding-left: ${p => (p.$inset ? 7 : 3)}px; }
`;

const CellButton = styled.button`
  display: block;
  width: 111px;
  height: 18px;
  border: 1px solid #bdbdbd;
  background: #cccccc;
  color: #8a8a8a;
  line-height: 14px;
`;

const TailRow = styled.tr`
  & > td { height: 3px; padding: 0; border-right: 1px dotted #777; }
`;

const VScroll = styled.div<{ $gap: number; $thumb: number; $track: string }>`
  display: flex;
  flex: none;
  flex-direction: column;
  align-items: center;
  justify-content: space-between;
  width: 16px;
  padding: 6px 0;
  background: ${p => p.$track};
  & > i {
    width: 15px;
    height: ${p => p.$thumb}px;
    margin: ${p => p.$gap}px 0 auto;
    background: #cdcdcd;
  }
`;

const PropsFooter = styled.div`
  display: flex;
  align-items: center;
  justify-content: space-between;
  height: 22px;
  padding: 0 1px 1px 2px;
  & > a { color: #0a64c8; }
`;

const ApplyButton = styled.button`
  width: 74px;
  height: 19px;
  border: 1px solid #c0c0c0;
  background: #cccccc;
  color: #888;
  line-height: 16px;
`;

/* ---------- drawing area ---------- */

const ViewFrame = styled.section`
  display: flex;
  flex: 1;
  flex-direction: column;
  min-width: 0;
  margin: 0 6px 2px 5px;
  border-top: 2px solid #6e6e6e;
  border-left: 2px solid #6e6e6e;
`;

const ViewRow = styled.div`
  display: flex;
  flex: 1;
`;

const Canvas = styled.div`
  position: relative;
  flex: 1;
  min-width: 0;
  overflow: hidden;
  background: #fff;
`;

const Drawing = styled.svg`
  position: absolute;
  left: 0;
  top: 0;
  width: 100%;
  height: 100%;
`;

const SnapTip = styled.div`
  position: absolute;
  left: 313px;
  top: 248px;
  padding: 2px 5px;
  border: 1px solid #767676;
  background: #fff;
  color: #575f73;
  box-shadow: 3px 3px 3px #8a8a8a;
`;

const Note = styled.div<{ $x: number; $y: number }>`
  position: absolute;
  left: ${p => p.$x}px;
  top: ${p => p.$y}px;
  color: ${RED};
  font-size: 21px;
  line-height: 24px;
  white-space: nowrap;
  z-index: 2;
`;

const ViewButtons = styled.div`
  position: absolute;
  right: 5px;
  top: 7px;
  display: flex;
  align-items: center;
  gap: 6px;
  & > button:first-child { padding-top: 3px; }
`;

const NavBar = styled.div`
  position: absolute;
  right: 1px;
  top: 27px;
  display: flex;
  flex-direction: column;
  align-items: center;
  width: 36px;
  height: 118px;
  padding: 1px 0 3px;
  border: 2px solid #c0c0c0;
  border-radius: 6px;
  background: #f4f4f4;
  color: #6f9fd0;
  & > * { flex: none; }
  & > button:first-child, & > button:last-child { align-self: flex-end; margin-right: 2px; }
  & > button:last-child { margin-top: auto; }
`;

const WheelButton = styled.button`
  display: flex;
  flex-direction: column;
  align-items: center;
  margin: 11px 0 3px;
  & > b { margin: -8px -14px 0 0; font-size: 11px; line-height: 12px; }
`;

const NavRule = styled.i`
  width: 26px;
  height: 1px;
  margin: 3px 0 8px;
  background: #bbb;
`;

const NavOption = styled.button`
  margin-top: 8px;
`;

const ViewControls = styled.div`
  display: flex;
  align-items: center;
  height: 17px;
  padding-left: 21px;
  background: #f0f0f0;
`;

const ScaleButton = styled.button`
  flex: none;
  width: 55px;
  text-align: left;
  white-space: pre;
  font-family: 'Liberation Sans', sans-serif;
  font-size: 12px;
  color: #000;
`;

const ControlButton = styled.button`
  display: flex;
  flex: none;
  justify-content: center;
  width: 21px;
`;

const HScroll = styled.div`
  display: flex;
  flex: 1;
  align-items: center;
  padding: 0 26px 0 0;
  & > i { width: 17px; height: 15px; margin: 0 auto; background: #cdcdcd; }
  & > svg:last-child { margin-right: -22px; margin-left: 12px; }
`;

/* ---------- browser tree ---------- */

const Tree = styled.ul`
  flex: 1;
  margin: 0;
  padding: 0;
  list-style: none;
  border-top: 1px solid #6e6e6e;
  border-left: 2px solid #6e6e6e;
  background: #fff;
  color: #000;
`;

const TreeRow = styled.li`
  display: flex;
  align-items: center;
  height: 20px;
`;

const dots = (deg: number) => `repeating-linear-gradient(${deg}deg, #999 0 1px, transparent 1px 2px)`;

const Guide = styled.i<{ $kind: string }>`
  display: flex;
  flex: none;
  align-items: center;
  width: 20px;
  height: 20px;
  padding-left: 4px;
  ${({ $kind }) => {
    const full = $kind === 'v' || $kind === 't';
    const start = $kind === 's';
    const up = $kind === 'n' ? '' : `${dots(180)} 8px ${start ? 10 : 0}px / 1px ${full ? 20 : 10}px no-repeat`;
    const side = $kind === 'v' || $kind === 'n' ? '' : `${dots(90)} 9px 10px / 11px 1px no-repeat`;
    return `background: ${[up, side].filter(Boolean).join(', ') || 'none'};`;
  }}
`;

const Toggle = styled.button<{ $open?: boolean }>`
  width: 9px;
  height: 9px;
  border: 1px solid #919191;
  background:
    linear-gradient(#2c4f94, #2c4f94) 1px 3px / 5px 1px no-repeat,
    ${p => (p.$open ? '' : 'linear-gradient(#2c4f94, #2c4f94) 3px 1px / 1px 5px no-repeat,')}
    #f6f6f6;
`;

const TreeIcon = styled.i`
  display: flex;
  flex: none;
  justify-content: center;
  width: 16px;
`;

const TreeLabel = styled.span<{ $on?: boolean }>`
  margin-left: 3px;
  padding: 0 3px;
  line-height: 20px;
  white-space: nowrap;
  ${p => p.$on && 'background: #e3e3e3; font-weight: 700;'}
`;

type Node = { g: string; box?: '+' | '-'; icon?: string; text: string; on?: boolean };

const nodes: Node[] = [
  { g: 's', box: '-', icon: 'views', text: '视图 (全部)' },
  { g: 'vt', box: '-', text: '楼层平面' },
  { g: 'vvt', text: 'T.O. Fnd. 墙' },
  { g: 'vvt', text: 'T.O. 基脚' },
  { g: 'vvt', text: 'T.O. 楼板' },
  { g: 'vvt', text: '场地' },
  { g: 'vvt', text: '标高 1', on: true },
  { g: 'vvl', text: '标高 2' },
  { g: 'vt', box: '+', text: '天花板平面' },
  { g: 'vt', box: '+', text: '三维视图' },
  { g: 'vt', box: '+', text: '立面 (建筑立面)' },
  { g: 'vt', box: '+', text: '面积平面 (人防分区面积)' },
  { g: 'vt', box: '+', text: '面积平面 (净面积)' },
  { g: 'vt', box: '+', text: '面积平面 (总建筑面积)' },
  { g: 'vl', box: '+', text: '面积平面 (防火分区面积)' },
  { g: 't', icon: 'legend', text: '图例' },
  { g: 't', box: '+', icon: 'schedule', text: '明细表/数量' },
  { g: 't', box: '+', icon: 'sheet', text: '图纸 (全部)' },
  { g: 't', box: '+', icon: 'family', text: '族' },
  { g: 't', box: '+', icon: 'group', text: '组' },
  { g: 'l', icon: 'link', text: 'Revit 链接' },
];

/* ---------- status bar ---------- */

const StatusBar = styled.footer`
  display: flex;
  align-items: center;
  height: 25px;
  border-top: 1px solid #8a8a8a;
  border-bottom: 1px solid #a8a8a8;
  background: linear-gradient(#ececec, #c9c9c9);
  color: #111;
`;

const StatusText = styled.span`
  flex: 0 1 487px;
  padding-left: 2px;
  white-space: nowrap;
`;

const StatusButton = styled.button<{ $w?: number }>`
  display: flex;
  flex: none;
  align-items: center;
  justify-content: center;
  gap: 6px;
  width: ${p => p.$w ?? 24}px;
  height: 21px;
  margin-right: 2px;
  background: #dadada;
  color: #000;
`;

const FilterButton = styled(StatusButton)`
  justify-content: flex-start;
  margin-left: 4px;
  padding-left: 5px;
`;

const StatusSpacer = styled.i`
  flex: 1;
`;

const Underlap = styled.div`
  height: 1px;
  background: linear-gradient(90deg, #222 0 210px, #999 0 270px, #555 0 545px, #d33 0 815px, #888 0);
`;

/* ---------- overlays ---------- */

const Overlay = styled.svg`
  position: absolute;
  left: 0;
  top: 0;
  width: 100%;
  height: 100%;
  pointer-events: none;
  z-index: 3;
`;

const Watermark = styled.svg`
  position: absolute;
  right: 59px;
  bottom: 23px;
  pointer-events: none;
  z-index: 3;
`;

/* ---------- data ---------- */

type Prop = { k: string; v?: string; dim?: boolean; inset?: boolean; kind?: 'button' | 'check' };

const graphicProps: Prop[] = [
  { k: '视图比例', v: '1 : 100', inset: true },
  { k: '比例值 1:', v: '100', dim: true },
  { k: '显示模型', v: '标准' },
  { k: '详细程度', v: '精细' },
  { k: '零件可见性', v: '显示原状态' },
  { k: '可见性/图形替换', v: '编辑...', kind: 'button' },
  { k: '图形显示选项', v: '编辑...', kind: 'button' },
  { k: '基线', v: '无' },
  { k: '基线方向', v: '平面', dim: true },
  { k: '方向', v: '项目北' },
  { k: '墙连接显示', v: '清理所有墙连接', dim: true },
  { k: '规程', v: '建筑' },
  { k: '显示隐藏线', v: '按规程' },
  { k: '颜色方案位置', v: '背景' },
  { k: '颜色方案', v: '<无>', kind: 'button' },
  { k: '系统颜色方案', v: '编辑...', kind: 'button' },
  { k: '默认分析显示样式', v: '无' },
  { k: '日光路径', kind: 'check' },
];

const extentProps: Prop[] = [
  { k: '裁剪视图', kind: 'check' },
  { k: '裁剪区域可见', kind: 'check' },
];

const tabs = ['建筑', '结构', '系统', '插入', '注释', '分析', '视图', '体量和场地', '协作', '管理', '附加模块', '族库大师V6.1', '建模大师（通用）', '构件坞'];

function PropValue({ item }: { item: Prop }) {
  if (item.kind === 'button') return <ButtonCell><CellButton>{item.v}</CellButton></ButtonCell>;
  if (item.kind === 'check') return <CheckCell><Check type="checkbox" disabled aria-label={item.k} /></CheckCell>;
  return <ValueCell $inset={item.inset}>{item.v}</ValueCell>;
}

function PropLines({ items }: { items: Prop[] }) {
  return (
    <>
      {items.map(p => (
        <PropRow key={p.k} $dim={p.dim}>
          <th scope="row">{p.k}</th>
          <PropValue item={p} />
        </PropRow>
      ))}
    </>
  );
}

function Group({ name }: { name: string }) {
  return (
    <tr>
      <GroupHead colSpan={2}><div>{name}<Icon name="collapse" /></div></GroupHead>
    </tr>
  );
}

/* Wall grid: nine bays each way, drawn in canvas coordinates. */
const GX = 311.5;
const GY = 19.5;
const GW = 338;
const GH = 434;
const steps = Array.from({ length: 10 }, (_, i) => i);

function PlanDrawing() {
  return (
    <Drawing aria-label="plan">
      <g stroke="#000" shapeRendering="crispEdges">
        {steps.map(i => {
          const x = Math.round((GW * i) / 9) + GX;
          const y = Math.round((GH * i) / 9) + GY;
          return (
            <React.Fragment key={i}>
              <line x1={x} x2={x} y1={GY} y2={GY + GH} />
              <line x1={GX} x2={GX + GW} y1={y} y2={y} />
            </React.Fragment>
          );
        })}
      </g>
      <g shapeRendering="crispEdges">
        <path d={`M${GX} ${GY}v${GH}`} stroke="#3d7fd6" strokeWidth="3" />
        <path d={`M${GX} ${GY}v${GH}`} stroke="#0b1f4d" strokeDasharray="8 3" />
      </g>
      <path d="M311.500 228l7 14h-14z" fill="none" stroke="#c73fd0" strokeWidth="1.500" />
      <g stroke="#000" fill="none">
        <circle cx="192" cy="245" r="14.500" />
        <path d="M204 237l8 8-8 8c2-5 2-11 0-16z" fill="#000" />
        <path d="M202 235l10 10-10 10M191 245h2M216 245h2" />
        <circle cx="519" cy="520" r="14.500" />
        <path d="M510 508l9-9 9 9c-6-3-12-3-18 0z" fill="#000" />
        <path d="M518 520h2M516 493h2" />
      </g>
      <path d="M223 150l3 0 50 57 3-6 4 18-18-7 6-2z" fill={RED} />
    </Drawing>
  );
}

export default function App() {
  return (
    <Page>
      <GlobalStyle />
      <Header>
        <TitleRow>
          <QuickBar>
            <Tool aria-label="open"><Icon name="open" /></Tool>
            <Tool aria-label="save"><Icon name="save" /></Tool>
            <Tool aria-label="sync"><Icon name="sync" /></Tool>
            <Tool $w={12} aria-label="sync options"><Icon name="down" /></Tool>
            <Tool aria-label="undo"><Icon name="undo" /></Tool>
            <Tool $w={12} aria-label="undo list"><Icon name="down" /></Tool>
            <Tool aria-label="redo"><Icon name="redo" /></Tool>
            <Tool $w={12} aria-label="redo list"><Icon name="down" /></Tool>
            <Divider $m={2} />
            <Tool $active aria-label="measure"><Icon name="measureSmall" /></Tool>
            <Tool $w={12} $active aria-label="measure options"><Icon name="down" /></Tool>
            <Tool $w={25} aria-label="dimension"><Icon name="dimension" /></Tool>
            <Tool aria-label="tag"><Icon name="tag" /></Tool>
            <Tool aria-label="text"><Icon name="textA" /></Tool>
            <Divider $m={3} />
            <Tool $w={24} aria-label="3d"><Icon name="house" /></Tool>
            <Tool $w={12} aria-label="3d options"><Icon name="down" /></Tool>
            <Tool aria-label="section"><Icon name="section" /></Tool>
            <Tool $active aria-label="thin lines"><Icon name="thinLines" /></Tool>
            <Divider $m={3} />
            <Tool $w={23} aria-label="close hidden"><Icon name="closeHidden" /></Tool>
            <Tool $w={25} aria-label="switch window"><Icon name="switchWin" /></Tool>
            <Tool $w={8} aria-label="switch list"><Icon name="down" /></Tool>
            <Tool $w={22} aria-label="customize"><Icon name="customize" /></Tool>
          </QuickBar>
          <DocTitle>项目1 - 楼层平面: 标高 1</DocTitle>
          <InfoCenter>
            <Tool $w={13} aria-label="toggle"><Icon name="right" /></Tool>
            <Search aria-label="search" placeholder="键入关键字或短语" />
            <Tool aria-label="find"><Icon name="binoc" /></Tool>
            <Tool aria-label="communication"><Icon name="dish" /></Tool>
            <Tool aria-label="favorites"><Icon name="star" /></Tool>
            <SignIn><Icon name="user" />登录<Icon name="down" /></SignIn>
            <Tool $w={34} aria-label="exchange"><Icon name="exchange" /></Tool>
            <Divider $m={0} />
            <HelpMark aria-label="help">?</HelpMark>
            <Tool $w={12} aria-label="help options"><Icon name="down" /></Tool>
          </InfoCenter>
          <WindowButtons>
            {['minimize', 'maximize', 'close'].map(n => <WinButton key={n} aria-label={n}><Icon name={n} /></WinButton>)}
          </WindowButtons>
        </TitleRow>
        <Tabs>
          {tabs.map(t => <Tab key={t}>{t}</Tab>)}
          <Tab $active>修改</Tab>
          <StateTool aria-label="ribbon state"><Icon name="ribbonState" /><Icon name="down" /></StateTool>
        </Tabs>
        <AppMenu aria-label="application menu"><Icon name="logo" /><Icon name="downLarge" /></AppMenu>
      </Header>

      <Ribbon>
        <Panel name="选择" w={49} arrow>
          <Big icon="cursor" label="修改" w={49} />
        </Panel>
        <Panel name="属性" w={45}>
          <Column $w={45}>
            <PropTile aria-label="type properties"><Icon name="typeProps" /></PropTile>
            <ActiveTile aria-label="properties"><Icon name="props" /></ActiveTile>
          </Column>
        </Panel>
        <Panel name="剪贴板" w={77}>
          <Big icon="paste" label="粘贴" w={52} dim arrow />
          <Grid names={['cut', 'copy', 'matchType']} cols={1} cell={20} row={24} />
        </Panel>
        <Panel name="几何图形" w={171} pad={7}>
          <GeoList>
            <GeoButton><Icon name="cope" /><span>连接端切割</span><Icon name="down" /></GeoButton>
            <GeoButton><Icon name="cutGeo" /><span>剪切</span><Icon name="down" /></GeoButton>
            <GeoButton><Icon name="joinGeo" /><span>连接</span><Icon name="down" /></GeoButton>
          </GeoList>
          <Grid names={['wallJoin', 'splitFace', 'beamJoin', 'unjoin', 'corner', 'hammer']} cols={2} cell={25} row={24} />
          <ArrowCol $top={34}><Icon name="down" /></ArrowCol>
        </Panel>
        <Panel name="修改" w={238} pad={3}>
          <Grid names={['align', 'offset', 'mirrorPick', 'mirrorDraw', 'move', 'copyObj', 'rotate', 'trim']} cols={4} cell={39} row={35} />
          <Grid names={['split', 'splitGap', 'unpin', 'array', 'scale', 'pin', 'trimOne', 'trimMany', 'del']} cols={3} cell={26} row={24} />
        </Panel>
        <Panel name="视图" w={65} pad={4}>
          <Grid names={['bulb', 'brush', 'hideBox']} cols={1} cell={22} row={24} />
          <ArrowCol $top={10}><Icon name="downDim" /><Icon name="downDim" /></ArrowCol>
          <Grid names={['displace', 'lineweight']} cols={1} cell={28} row={24} />
        </Panel>
        <Panel name="测量" w={56} pad={2}>
          <Column $w={52}>
            <Split $active>
              <button aria-label="measure"><Icon name="measure" /></button>
              <button aria-label="measure options"><Icon name="down" /></button>
            </Split>
            <Split>
              <button aria-label="dimension"><Icon name="dimensionBig" /></button>
              <button aria-label="dimension options"><Icon name="down" /></button>
            </Split>
          </Column>
        </Panel>
        <Panel name="创建" w={82} pad={3}>
          <Grid names={['assembly', 'groupNew', 'similar', 'parts']} cols={2} cell={38} row={35} />
        </Panel>
        <Panel name="建模大师（通用）" w={284} pad={2}>
          <Big icon="box3d" label="框选三维" w={70} />
          <Big icon="filter" label="高级过滤" w={70} />
          <Big icon="offsetAlign" label="偏移对齐" w={70} />
          <Big icon="rename" label="框选改名" w={70} />
        </Panel>
      </Ribbon>

      <OptionsBar>
        <label htmlFor="total-length">总长度:</label>
        <LengthInput id="total-length" />
        <Divider $m={10} />
        <ChainLabel><Check type="checkbox" />链</ChainLabel>
      </OptionsBar>

      <Main>
        <Palette $w={246}>
          <PaletteTitle>属性<button aria-label="close properties"><Icon name="closeBold" /></button></PaletteTitle>
          <PropsFrame>
            <TypePicker>
              <Thumb><Icon name="floorPlan" /></Thumb>
              <span>楼层平面</span>
              <Icon name="downLarge" />
            </TypePicker>
            <InstanceRow>
              <Select w={161} h={24} bg="#cccccc" label="instance" value="楼层平面: 标高 1" />
              <EditType><Icon name="editType" />编辑类型</EditType>
            </InstanceRow>
            <PropsScroll>
              <PropTable>
                <colgroup><col width="114" /><col /></colgroup>
                <tbody>
                  <Group name="图形" />
                  <PropLines items={graphicProps} />
                  <Group name="范围" />
                  <PropLines items={extentProps} />
                  <TailRow><td /><td /></TailRow>
                </tbody>
              </PropTable>
              <VScroll $gap={5} $thumb={243} $track="#f0f0f0"><Icon name="chevUp" /><i /><Icon name="chevDown" /></VScroll>
            </PropsScroll>
            <PropsFooter>
              <a href="#help">属性帮助</a>
              <ApplyButton>应用</ApplyButton>
            </PropsFooter>
          </PropsFrame>
        </Palette>

        <ViewFrame>
          <ViewRow>
            <Canvas>
              <PlanDrawing />
              <SnapTip>中点</SnapTip>
              <Note $x={80} $y={118}>只捕捉到中点</Note>
              <ViewButtons>
                {['winMin', 'winRestore', 'winClose'].map(n => <button key={n} aria-label={n}><Icon name={n} /></button>)}
              </ViewButtons>
              <NavBar>
                <button aria-label="close navigation"><Icon name="navClose" /></button>
                <WheelButton><Icon name="wheel" /><b>2D</b></WheelButton>
                <Icon name="downDim" />
                <NavRule />
                <button aria-label="zoom region"><Icon name="zoomRegion" /></button>
                <NavOption aria-label="zoom options"><Icon name="downDim" /></NavOption>
                <button aria-label="navigation menu"><Icon name="navMenu" /></button>
              </NavBar>
            </Canvas>
            <VScroll $gap={263} $thumb={17} $track="#efefef"><Icon name="chevUp" /><i /><Icon name="chevDown" /></VScroll>
          </ViewRow>
          <ViewControls>
            <ScaleButton>{'1  :  100'}</ScaleButton>
            {['detail', 'visual', 'sun', 'shadow', 'crop', 'cropShow', 'glasses', 'reveal', 'tempView', 'analysis', 'constraint', 'chevLeft'].map(n => (
              <ControlButton key={n} aria-label={n}><Icon name={n} /></ControlButton>
            ))}
            <HScroll><i /><Icon name="chevRight" /><Icon name="grip" /></HScroll>
          </ViewControls>
        </ViewFrame>

        <Palette $w={233}>
          <PaletteTitle>项目浏览器 - 项目1<button aria-label="close browser"><Icon name="closeBold" /></button></PaletteTitle>
          <Tree>
            {nodes.map(n => (
              <TreeRow key={n.text}>
                {n.g.split('').map((k, i) => (
                  <Guide key={i} $kind={k}>
                    {n.box && i === n.g.length - 1 && <Toggle $open={n.box === '-'} aria-label={n.text} />}
                  </Guide>
                ))}
                {n.icon && <TreeIcon><Icon name={n.icon} /></TreeIcon>}
                <TreeLabel $on={n.on}>{n.text}</TreeLabel>
              </TreeRow>
            ))}
          </Tree>
        </Palette>
      </Main>

      <StatusBar>
        <StatusText>[线 : 模型线] 的中点</StatusText>
        <StatusButton $w={25} aria-label="worksets"><Icon name="workset" /></StatusButton>
        <Select w={205} h={21} bg="#ffffff" label="workset" value="" />
        <FilterButton $w={52}><Icon name="editable" />:0</FilterButton>
        <StatusButton aria-label="design options"><Icon name="designOpt" /></StatusButton>
        <StatusButton $w={25} aria-label="add to set"><Icon name="pickAdd" /></StatusButton>
        <Select w={155} h={21} bg="#ffffff" label="design option" value="主模型" />
        <StatusSpacer />
        {['selLinks', 'selUnder', 'selPinned', 'selFace'].map(n => (
          <StatusButton key={n} aria-label={n}><Icon name={n} /></StatusButton>
        ))}
        <Icon name="grip" />
      </StatusBar>
      <Underlap />

      <Note $x={546} $y={155}>测量</Note>
      <Overlay aria-hidden="true">
        <g fill={RED}>
          <path d="M606 155l26-37-4-2 18-6-2 17-3-4-33 34z" />
          <path d="M892 50l16 3-2 5 23 25-1 2-26-20-4 2z" />
        </g>
      </Overlay>
      <Watermark width="235" height="112" viewBox="0 0 235 112" aria-hidden="true">
        <g fill="#fff" fillOpacity=".8" stroke="#d2d2d2" strokeWidth="1.500">
          <ellipse cx="86" cy="28" rx="9" ry="12" />
          <ellipse cx="102" cy="13" rx="8" ry="12" />
          <ellipse cx="122" cy="14" rx="8" ry="12" />
          <ellipse cx="135" cy="33" rx="9" ry="12" />
          <path d="M110 29c10 0 14 12 24 20 12 12 4 22-8 22-7 0-10-2-16-2s-9 2-16 2c-12 0-18-12-8-22 9-9 14-20 24-20z" />
          <text x="0" y="71" fontFamily="Liberation Sans" fontWeight="700" fontSize="50">Bai</text>
          <text x="91" y="66" fontFamily="Liberation Sans" fontWeight="700" fontSize="31">du</text>
          <text x="147" y="68" fontFamily="Noto Sans CJK SC" fontWeight="700" fontSize="38">经验</text>
          <text x="2" y="101" fontFamily="Noto Sans" fontWeight="400" fontSize="26">jingyan.baidu.com</text>
        </g>
      </Watermark>
    </Page>
  );
}
